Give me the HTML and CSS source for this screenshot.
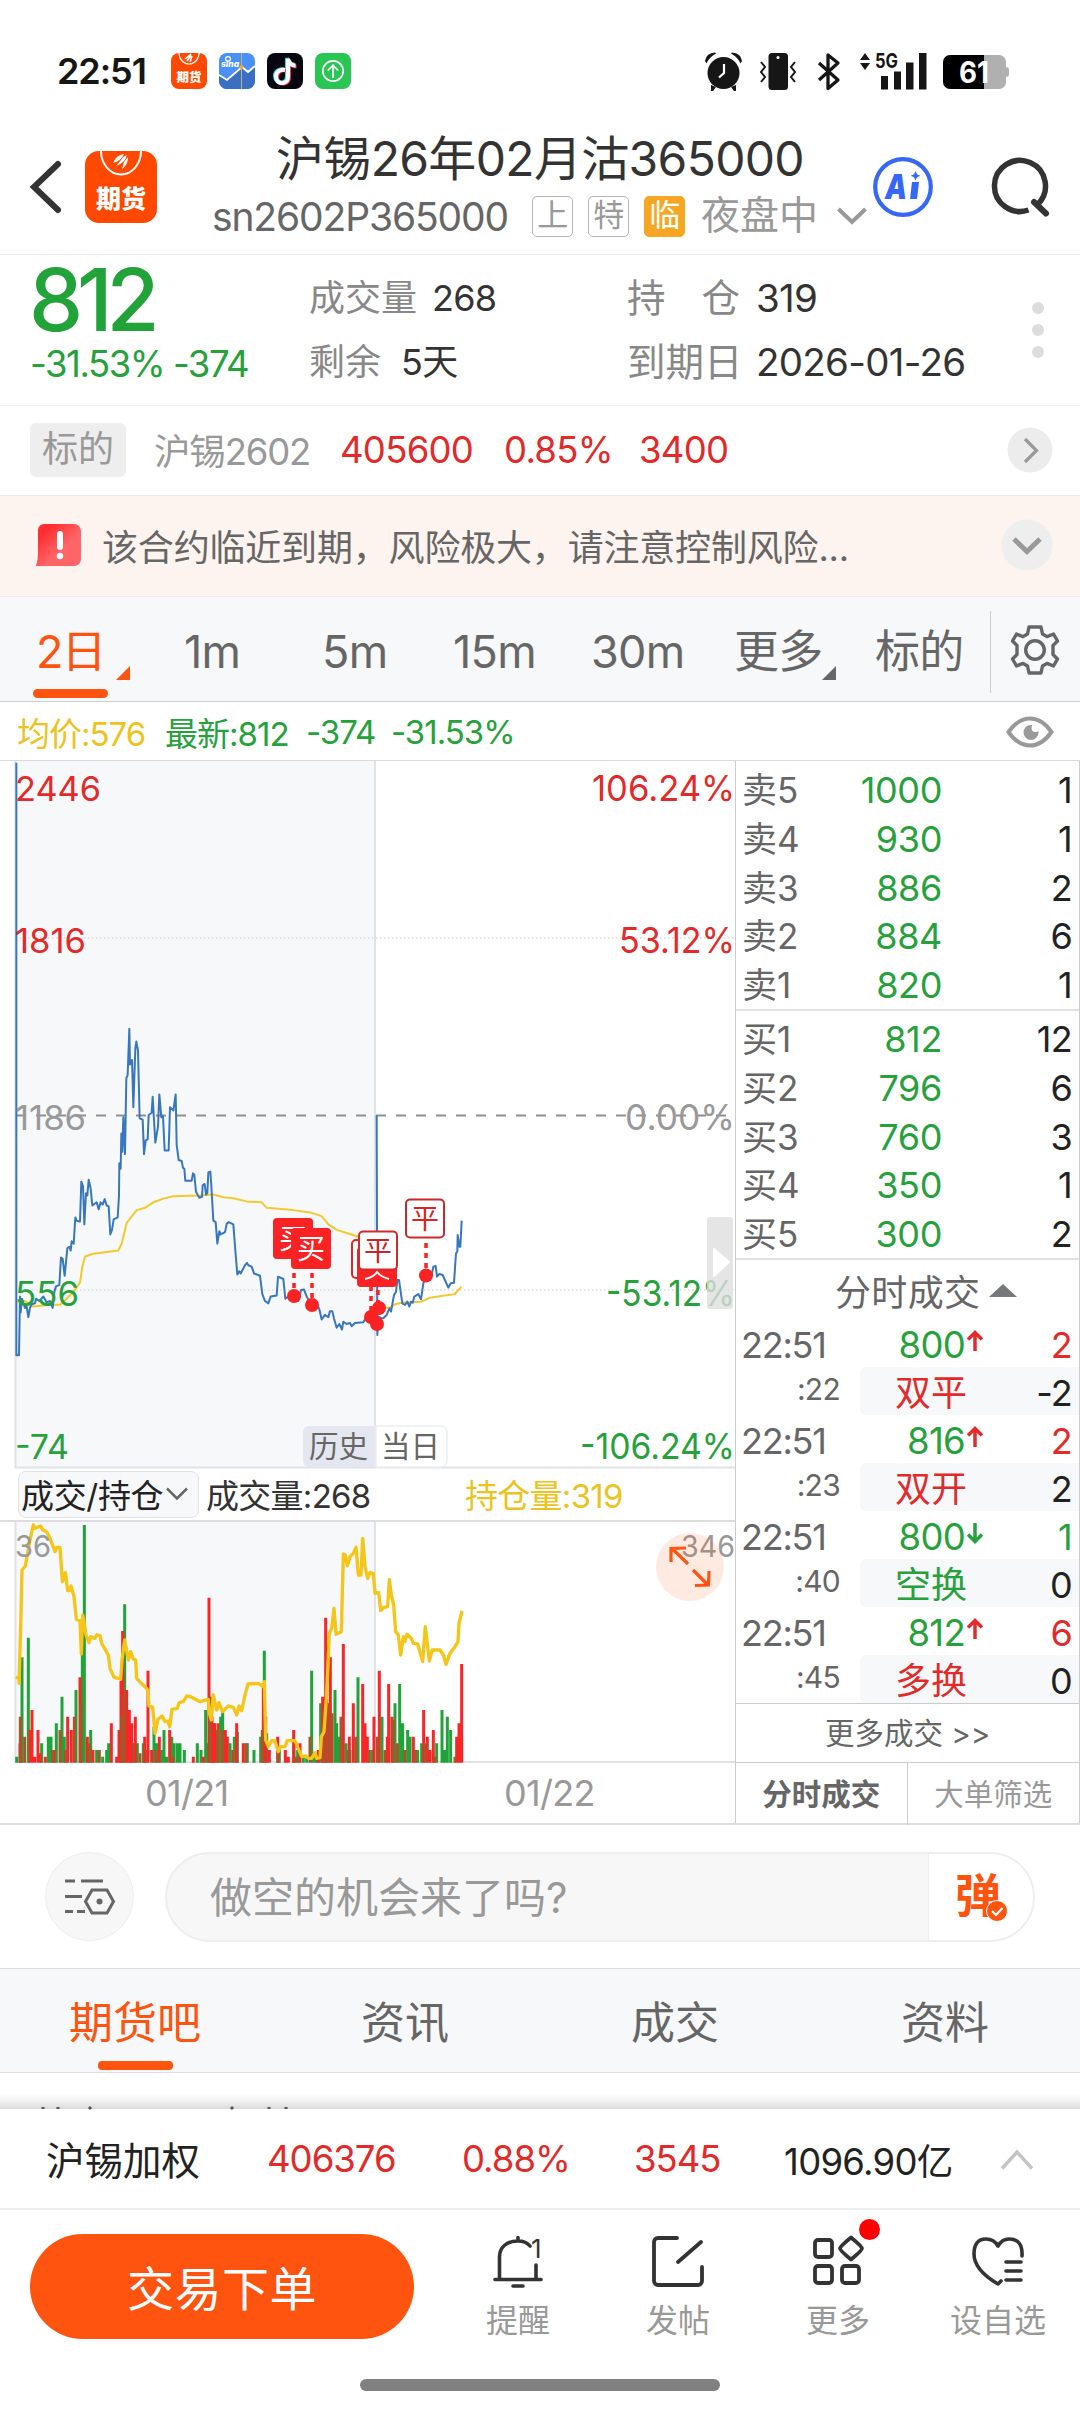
FILE: index.html
```html
<!DOCTYPE html>
<html lang="zh-CN">
<head>
<meta charset="utf-8">
<title>沪锡26年02月沽365000</title>
<link rel="stylesheet" href="styles.css">
</head>
<body>
<div class="screen">

  <div class="status">
    <span class="clock">22:51</span>
    <svg class="app" viewBox="0 0 36 36"><rect width="36" height="36" rx="8" fill="#ff4800"/><path d="M8 0a10 11 0 0 0 20 0" fill="none" stroke="#fff" stroke-width="1.2"/><path d="M14 6l6-5M16 8l4-6M19 9l2-6" stroke="#fff" stroke-width="1.6"/><text x="18" y="29" font-size="12.5" font-weight="900" fill="#fff" text-anchor="middle">期货</text></svg>
    <svg class="app" viewBox="0 0 36 36"><defs><clipPath id="appClip"><rect width="36" height="36" rx="8"/></clipPath></defs><g clip-path="url(#appClip)"><rect width="36" height="36" fill="#4a90f7"/><path d="M0 22l8 5 15-13 6 5 7-6v23H0z" fill="#3b6fc4"/><path d="M0 22l8 5 15-13 6 5 7-6" fill="none" stroke="#fff" stroke-width="1.8"/><path d="M22.500 0v36" stroke="#b9b08e"/><circle cx="22.500" cy="14" r="2" fill="#f5a623"/></g><circle cx="9" cy="6" r="2.400" fill="none" stroke="#fff" stroke-width="1.200"/><text x="2" y="13.500" font-size="8.500" font-style="italic" font-weight="800" fill="#fff">sina</text></svg>
    <svg class="app" viewBox="0 0 36 36"><rect width="36" height="36" rx="8" fill="#07070f"/><g fill="none" stroke-width="4"><path d="M17 16.500c-5-1-9 2-9 6.500s3.500 7 7 6.500 5-3 5-6.500V5c1 4 4 6.500 7.500 6.500" stroke="#25e0dd"/><path d="M19 17.500c-5-1-9 2-9 6.500s3.500 7 7 6.500 5-3 5-6.500V7c1 4 4 6.500 7.500 6.500" stroke="#f8305c"/><path d="M18 17c-5-1-9 2-9 6.500s3.500 7 7 6.500 5-3 5-6.500V6c1 4 4 6.500 7.500 6.500" stroke="#fff"/></g></svg>
    <svg class="app" viewBox="0 0 36 36"><rect width="36" height="36" rx="8" fill="#2ac653"/><g fill="none" stroke="#fff" stroke-width="1.700"><circle cx="18" cy="18" r="10.200"/><path d="M18 25V12.500M12.800 17.500L18 12.300l5.200 5.200"/></g></svg>
    <span class="grow"></span>
    <svg class="sys" viewBox="705 51 304 38">
      <g fill="#161616">
        <circle cx="723.500" cy="72" r="16"/>
        <path d="M705 60q1-8 10-8.500l1 1q-7 4-9.500 10zM742 60q-1-8-10-8.500l-1 1q7 4 9.500 10zM711 84l5 2-3 4h-2zM736 84l-5 2 3 4h2z"/>
        <rect x="768.500" y="52" width="19.500" height="37" rx="3.500"/>
        <path d="M860 59l5-7 5 7zM860 62l5 7 5-7z"/>
        <path d="M881 75h7v13.500h-7zM894 70.500h7v18h-7zM906 61.500h7.500v27H906zM919 52h7.500v36.500H919z"/>
      </g>
      <path d="M724 63v9l-5 4.500" fill="none" stroke="#fff" stroke-width="2.200"/>
      <circle cx="778" cy="56.500" r="1.500" fill="#fff"/>
      <path d="M761 61l4 5-4 5 4 5-4 5M795 61l-4 5 4 5-4 5 4 5" fill="none" stroke="#161616" stroke-width="2"/>
      <path d="M819 62l19 17-10 8.500V54l10 8-19 17" fill="none" stroke="#161616" stroke-width="3.300" stroke-linejoin="round"/>
      <text x="875" y="67" font-size="20" font-weight="700" fill="#161616" textLength="23" lengthAdjust="spacingAndGlyphs">5G</text>
      <path d="M984 54h15a7 7 0 0 1 7 7v5q3 0 3 3v4q0 3-3 3v5a7 7 0 0 1-7 7h-15z" fill="#b0b0b0"/>
      <path d="M984 54v34h-34a7 7 0 0 1-7-7V61a7 7 0 0 1 7-7z" fill="#000"/>
      <text x="959" y="82" font-size="30" font-weight="700" fill="#fff" textLength="30" lengthAdjust="spacingAndGlyphs">61</text>
    </svg>
  </div>

  <div class="header">
    <svg class="back" viewBox="0 0 32 54"><path d="M28 4L4 27l24 23" fill="none" stroke="#333" stroke-width="6" stroke-linecap="round"/></svg>
    <svg class="logo" viewBox="0 0 72 72"><rect width="72" height="72" rx="14" fill="#ff4800"/><path d="M16 0a20 23.500 0 0 0 40 0" fill="none" stroke="#fff" stroke-width="2"/><path d="M28 12q8-2 11-9-8 1-11 9zM31 15q9-3 11-11-4 1-6 5zM37 18q6-4 6-12l-4 5z" fill="#fff"/><text x="36" y="57" font-size="25" font-weight="900" fill="#fff" text-anchor="middle">期货</text></svg>
    <div class="titles">
      <div class="title">沪锡26年02月沽365000</div>
      <div class="subtitle">
        <span class="code">sn2602P365000</span>
        <span class="tag">上</span><span class="tag">特</span><span class="tag tag-hot">临</span>
        <span class="session">夜盘中</span>
        <svg class="caret" viewBox="0 0 30 18"><path d="M1.500 2L15 15 28.500 2" fill="none" stroke="#999" stroke-width="4"/></svg>
      </div>
    </div>
    <svg class="ai" viewBox="0 0 60 60"><circle cx="30" cy="30" r="27.800" fill="none" stroke="#3767f5" stroke-width="4.200"/><text x="12" y="42" font-size="34" font-weight="900" font-style="italic" fill="#3767f5" textLength="22" lengthAdjust="spacingAndGlyphs">A</text><path d="M39 25h7l-2 17h-7z" fill="#3767f5"/><path d="M42.500 14l1.500 3.200 3.200 1.500-3.200 1.500-1.500 3.200-1.500-3.200-3.200-1.500 3.200-1.500z" fill="#3767f5"/></svg>
    <svg class="search" viewBox="0 0 58 58"><path d="M37.500 52A25.500 25.500 0 1 1 47 46" fill="none" stroke="#333" stroke-width="5.500"/><path d="M43 44l12 11.500" stroke="#333" stroke-width="6" stroke-linecap="round"/></svg>
  </div>

  <div class="quote">
    <div class="main">
      <div class="last">812</div>
      <div class="change">-31.53% -374</div>
    </div>
    <dl class="facts">
      <div><dt>成交量</dt><dd>268</dd></div>
      <div class="remain"><dt>剩余</dt><dd>5天</dd></div>
    </dl>
    <dl class="facts wide">
      <div><dt class="spread"><span>持</span><span>仓</span></dt><dd>319</dd></div>
      <div><dt>到期日</dt><dd>2026-01-26</dd></div>
    </dl>
    <div class="dots"><i></i><i></i><i></i></div>
  </div>

  <div class="underlying">
    <span class="chip">标的</span>
    <span class="uname">沪锡2602</span>
    <span class="up">405600</span>
    <span class="up">0.85%</span>
    <span class="up">3400</span>
    <svg class="round" viewBox="0 0 46 46"><circle cx="23" cy="23" r="22.500" fill="#ececec"/><path d="M18 12l11.500 11.500L18 35" fill="none" stroke="#999" stroke-width="3.200"/></svg>
  </div>

  <div class="notice">
    <svg class="alert" viewBox="0 0 45 42"><defs><linearGradient id="alertFill" x1="0" y1="0" x2="1" y2="1"><stop offset=".2" stop-color="#ff2f31"/><stop offset=".6" stop-color="#ff6568"/></linearGradient></defs><path d="M8 0h30a7 7 0 0 1 7 7v28a7 7 0 0 1-7 7H0q2-6 2-12V6a6 6 0 0 1 6-6z" fill="url(#alertFill)"/><rect x="21" y="7" width="6" height="19" rx="3" fill="#fff"/><circle cx="24" cy="32" r="3.200" fill="#fff"/></svg>
    <span class="msg">该合约临近到期，风险极大，请注意控制风险...</span>
    <svg class="fold" viewBox="0 0 52 52"><circle cx="26" cy="26" r="25.500" fill="#eee"/><path d="M13 20l13 12.500L39 20" fill="none" stroke="#999" stroke-width="5"/></svg>
  </div>

  <div class="periods">
    <span class="on">2日</span>
    <span>1m</span>
    <span>5m</span>
    <span>15m</span>
    <span>30m</span>
    <span class="more">更多</span>
    <span>标的</span>
    <span class="gear"><svg viewBox="-24 -25 48 50"><g fill="none" stroke="#666" stroke-width="3.400" stroke-linejoin="round"><path d="M-6-23H6l1.500 7 4.500 2.600 6.500-2.600 4 7-4.500 4.500v9L22.500 9l-4 7-6.500-2.600L7.500 16 6 23H-6l-1.500-7-4.500-2.600-6.500 2.600-4-7 4.500-4.500v-9L-22.500-9l4-7 6.500 2.600L-7.500-16z"/><circle r="9.300"/></g></svg></span>
  </div>

  <div class="legend">
    <span class="avg">均价:576</span>
    <span>最新:812</span>
    <span>-374</span>
    <span>-31.53%</span>
    <svg class="eye" viewBox="0 0 48 32"><path d="M2.500 16Q12 2.500 24 2.500T45.500 16Q36 29.500 24 29.500T2.500 16z" fill="none" stroke="#999" stroke-width="4"/><circle cx="25" cy="16.500" r="7.500" fill="#999"/><circle cx="29.500" cy="12" r="4" fill="#fff"/></svg>
  </div>

  <div class="board">
    <div class="charts">
      <svg class="price" viewBox="0 761 738 707">
        <rect x="15" y="761" width="360" height="707" fill="#f7f8fa"/>
        <g stroke="#e1e2e5" stroke-width="2"><path d="M15.500 761v707M375 761v707M15 1467.500h721"/></g>
        <path d="M16 938h720M16 1290h720" stroke="#dcdcdc" stroke-width="1.500" stroke-dasharray="1.500 2.500"/>
        <path d="M16 1115.500h720" stroke="#8f8f8f" stroke-width="2" stroke-dasharray="10 10"/>
        <g fill="none" stroke="#f3c92e" stroke-width="2" stroke-linejoin="round">
          <path transform="translate(0 750) scale(.33333 .4592)" vector-effect="non-scaling-stroke" d="M49 1200L75 1200 100 1212 150 1208 180 1208 200 1195 225 1175 240 1160 247 1125 255 1103 280 1097 355 1090 365 1075 380 1030 410 1002 435 997 460 985 490 977 520 972 600 970 640 968 670 974 700 976 740 983 785 985 800 997 880 1002 930 1007 965 1015 985 1033 1010 1045 1045 1053 1075 1060"/>
          <path transform="translate(340 1020) scale(.33333)" vector-effect="non-scaling-stroke" d="M135 863L150 863 165 853 185 848 245 845 270 833 345 822 355 810 365 800"/>
        </g>
        <g fill="none" stroke="#3877bd" stroke-width="2" stroke-linejoin="round">
          <path transform="translate(0 750) scale(.33333 .4592)" vector-effect="non-scaling-stroke" d="M49 28L49 1318 57 1318 60 1190 62 1225 66 1195 75 1215 80 1212 85 1235 90 1215 95 1207 105 1205 108 1195 118 1200 130 1190 140 1203 150 1200 158 1215 163 1180 168 1168 178 1165 183 1105 188 1108 194 1145 202 1085 208 1082 212 1090 215 1070 221 1075 226 1018 230 1025 240 1027 244 940 249 950 253 1033 258 965 262 970 266 936 272 955 277 992 290 985 296 1000 302 985 308 990 314 978 320 992 326 994 331 1055 336 1045 341 1022 353 1018 357 970 358 900 362 912 364 835 367 875 370 800 375 880 379 715 383 708 388 607 390 685 396 675 400 778 406 650 409 635 414 655 419 802 428 805 432 880 437 850 443 848 446 795 455 790 458 755 466 855 474 820 478 750 484 800 489 798 494 872 506 872 510 778 520 785 527 750 530 860 536 893 545 895 549 910 553 912 556 938 575 938 579 922 583 925 588 962 598 975 606 973 608 948 614 945 618 968 622 965 625 920 631 918 634 950 640 1025 647 1028 652 1075 658 1048 662 1055 675 1050 680 1032 686 1028 700 1033 706 1090 712 1142 718 1135 722 1140 735 1122 741 1117 745 1122 755 1125 762 1140 780 1145 787 1185 795 1200 805 1205 812 1190 830 1188 834 1147 850 1152 856 1195 865 1190 882 1190 895 1200 903 1176 912 1175 920 1190 935 1210 950 1205 958 1218 965 1240 975 1230 985 1235 990 1222 997 1222 1002 1238 1010 1258 1018 1250 1026 1262 1030 1245 1040 1250 1050 1248 1055 1255 1065 1248 1090 1246 1100 1235 1115 1232"/>
          <path transform="translate(340 1020) scale(.33333)" vector-effect="non-scaling-stroke" d="M110 286L112 945 115 890 125 895 130 895 140 885 148 865 153 875 162 825 168 815 172 780 177 780 187 850 195 855 202 845 208 860 213 845 218 848 223 830 235 822 243 838 250 790 258 768 275 765 280 740 287 738 291 770 298 762 308 765 325 803 332 790 342 788 348 700 352 695 353 645 358 680 361 680 365 602"/>
        </g>
        <g stroke="#fa2222" stroke-width="3.500" stroke-dasharray="5 5"><path d="M294 1273v20M312 1273v28M371 1286v28M378 1290v28M426 1243v30"/></g>
        <g fill="#fa2222"><circle cx="294" cy="1296" r="7"/><circle cx="312" cy="1305" r="7"/><circle cx="379" cy="1308" r="7"/><circle cx="371" cy="1317" r="7"/><circle cx="377" cy="1324" r="7"/><circle cx="426" cy="1275.500" r="7"/></g>
        <g font-size="28" text-anchor="middle">
          <rect x="273" y="1218" width="40" height="41" rx="4" fill="#fa2222"/><text x="293" y="1249" fill="#fff">买</text>
          <rect x="291" y="1228" width="40" height="41" rx="4" fill="#fa2222"/><text x="311" y="1259" fill="#fff">买</text>
          <rect x="352" y="1240" width="38" height="38" rx="4" fill="#fff" stroke="#d5292b" stroke-width="2"/>
          <rect x="357" y="1247" width="40" height="40" rx="4" fill="#fa2222"/><path d="M365 1279q9-2 12-7 4 5 12 7" fill="none" stroke="#fff" stroke-width="2"/>
          <rect x="359" y="1231.500" width="38" height="38" rx="4" fill="#fff" stroke="#d5292b" stroke-width="2"/><text x="378" y="1261" fill="#c62628">平</text>
          <rect x="406" y="1199.500" width="38" height="38" rx="4" fill="#fff" stroke="#c8292b" stroke-width="2"/><text x="425" y="1229" fill="#d62628">平</text>
        </g>
        <g font-size="34.500">
          <text x="15" y="801" fill="#e32a2a" textLength="86" lengthAdjust="spacingAndGlyphs">2446</text>
          <text x="15" y="953" fill="#e32a2a" textLength="71" lengthAdjust="spacingAndGlyphs">1816</text>
          <text x="15" y="1130" fill="#999" textLength="71" lengthAdjust="spacingAndGlyphs">1186</text>
          <text x="15" y="1305.500" fill="#26a13c" textLength="64" lengthAdjust="spacingAndGlyphs">556</text>
          <text x="15" y="1458.500" fill="#26a13c" textLength="54" lengthAdjust="spacingAndGlyphs">-74</text>
        </g>
        <g font-size="36">
          <text x="592" y="801" fill="#e32a2a" textLength="143" lengthAdjust="spacingAndGlyphs">106.24%</text>
          <text x="619" y="953" fill="#e32a2a" textLength="116" lengthAdjust="spacingAndGlyphs">53.12%</text>
          <text x="625" y="1130" fill="#999" textLength="110" lengthAdjust="spacingAndGlyphs">0.00%</text>
          <text x="606" y="1306" fill="#26a13c" textLength="129" lengthAdjust="spacingAndGlyphs">-53.12%</text>
          <text x="580" y="1459" fill="#26a13c" textLength="155" lengthAdjust="spacingAndGlyphs">-106.24%</text>
        </g>
        <path d="M375 1426h-66a6 6 0 0 0-6 6v29a6 6 0 0 0 6 6h66z" fill="#e4e7ef"/>
        <path d="M376 1426h65a6 6 0 0 1 6 6v29a6 6 0 0 1-6 6h-65z" fill="#fff" stroke="#eceef2" stroke-width="1.500"/>
        <g font-size="29.500" fill="#666"><text x="309" y="1457">历史</text><text x="381" y="1457">当日</text></g>
        <rect x="707" y="1217" width="26" height="92" rx="3" fill="#dedede" opacity=".8"/><path d="M714 1249l15 13-15 14z" fill="#fff" stroke="#fff" stroke-width="2" stroke-linejoin="round"/>
      </svg>

      <div class="indicator">
        <span class="picker">成交/持仓<svg viewBox="0 0 22 14"><path d="M1 1.500l10 10 10-10" fill="none" stroke="#666" stroke-width="2.500"/></svg></span>
        <span class="vol">成交量:268</span>
        <span class="oi">持仓量:319</span>
      </div>

      <svg class="volume" viewBox="0 1522 738 241">
        <rect x="15" y="1522" width="360" height="240" fill="#f7f8fa"/>
        <g stroke="#e1e2e5" stroke-width="2"><path d="M15.500 1522v241M375 1522v241M15 1762h721"/></g>
        <g transform="translate(0 1460) scale(.33333)" fill="none" stroke-width="9">
          <path stroke="#22a33a" d="M50 908V890M66 908V592M85 908V533M125 908V850M145 908V830M153 908V830M169 908V790M186 908V710M193 908V830M228 908V690M247 908V560M253 908V195M272 908V810M290 908V870M308 908V890M320 908V870M326 908V850M374 908V433M393 908V850M400 908V850M412 908V850M430 908V850M437 908V870M462 908V800M470 908V850M485 908V870M492 908V810M500 908V890M515 908V830M522 908V850M532 908V850M540 908V850M553 908V870M592 908V850M603 908V870M617 908V750M622 908V850M640 908V790M652 908V810M662 908V770M668 908V750M690 908V850M703 908V830M712 908V815M742 908V850M762 908V870M782 908V830M793 908V572M800 908V820M838 908V870M882 908V850M893 908V870M910 908V890M920 908V895M935 908V632M942 908V880M962 908V730M980 908V715M1005 908V690M1010 908V790M1018 908V830M1038 908V850M1050 908V870M1074 908V652M1115 908V870M1146 908V770M1185 908V730M1199 908V672M1208 908V790M1223 908V810M1230 908V830M1253 908V870M1265 908V850M1310 908V850M1326 908V750M1335 908V870M1342 908V770M1352 908V810"/>
          <path stroke="#fa2626" d="M60 908V850M90 908V810M96 908V750M104 908V890M114 908V810M120 908V880M136 908V890M162 908V870M203 908V770M214 908V810M240 908V652M262 908V830M279 908V870M334 908V790M350 908V890M357 908V810M363 908V662M368 908V513M380 908V690M388 908V750M395 908V790M406 908V770M434 908V830M444 908V632M455 908V870M478 908V830M509 908V810M580 908V890M610 908V890M627 908V413M636 908V770M645 908V790M676 908V810M682 908V830M710 908V790M730 908V850M790 908V670M797 908V770M808 908V870M833 908V830M856 908V870M865 908V890M881 908V810M900 908V850M955 908V870M968 908V710M977 908V473M991 908V592M1030 908V552M1048 908V830M1060 908V730M1088 908V672M1095 908V790M1102 908V830M1122 908V770M1138 908V632M1166 908V672M1176 908V770M1162 908V830M1240 908V830M1271 908V750M1282 908V830M1300 908V810M1290 908V870M1370 908V830M1377 908V790M1385 908V612"/>
          <path stroke="#a8552a" d="M61 908V770M74 908V830M158 908V870M180 908V810M196 908V870M223 908V770M243 908V730M268 908V850M298 908V870M365 908V770M372 908V710M420 908V880M468 908V870M520 908V890M631 908V710M655 908V790M667 908V810M698 908V870M738 908V850M787 908V810M835 908V860M888 908V890M930 908V830M950 908V890M972 908V810M984 908V730M996 908V760M1023 908V770M1045 908V870M1068 908V830M1107 908V870M1132 908V830M1155 908V870M1180 908V780M1192 908V850M1215 908V870M1247 908V870M1276 908V850M1305 908V890M1365 908V890"/>
          <path stroke="#f5c518" stroke-width="10" stroke-linejoin="round" d="M47 652L57 655 57 670 62 500 66 330 76 318 90 240 100 195 105 205 122 198 128 210 140 215 150 235 165 275 170 262 180 262 187 365 196 338 203 392 208 392 213 378 222 410 229 478 240 482 244 582 248 465 252 485 258 525 267 548 272 530 285 535 290 525 300 527 305 550 325 585 330 625 342 652 362 657 366 600 374 540 385 600 392 575 400 597 407 600 410 655 422 668 435 680 443 690 447 738 458 742 465 820 474 778 486 768 495 785 503 783 509 800 516 748 532 745 537 728 550 725 560 708 572 710 600 725 625 718 628 760 634 780 640 705 650 750 657 728 667 755 685 738 700 742 710 765 717 738 725 752 735 705 744 672 775 670 790 680 793 665 797 840 805 860 815 842 825 843 835 875 842 860 855 860 862 842 885 842 893 862 905 890 918 888 925 895 935 895 945 878 950 895 960 893 964 830 972 815 980 700 988 520 995 505 1002 445 1008 523 1024 515 1030 282 1036 285 1042 317 1050 290 1060 280 1068 262 1075 345 1083 345 1088 235 1095 320 1103 355 1110 338 1120 340 1125 400 1136 398 1142 452 1150 443 1163 440 1168 358 1174 405 1181 435 1187 515 1195 525 1202 585 1210 530 1214 545 1221 523 1234 535 1240 550 1253 552 1268 605 1276 500 1288 603 1297 570 1320 570 1330 585 1338 613 1350 580 1365 560 1374 545 1377 490 1386 453"/>
        </g>
        <g font-size="30" fill="#999"><text x="15" y="1557" textLength="36" lengthAdjust="spacingAndGlyphs">36</text><text x="681" y="1557" textLength="54" lengthAdjust="spacingAndGlyphs">346</text></g>
        <circle cx="690" cy="1567" r="34" fill="#ff5310" opacity=".12"/>
        <path d="M688 1564l-16-15.500M671 1562v-13.500l15-.5M693 1570l15 15M695 1585.500l13.500-.5.500-14" fill="none" stroke="#ff5310" stroke-width="3.200"/>
      </svg>

      <div class="dates"><span>01/21</span><span>01/22</span></div>
    </div>

    <div class="book">
      <div class="levels asks">
        <div><span>卖5</span><b>1000</b><em>1</em></div>
        <div><span>卖4</span><b>930</b><em>1</em></div>
        <div><span>卖3</span><b>886</b><em>2</em></div>
        <div><span>卖2</span><b>884</b><em>6</em></div>
        <div><span>卖1</span><b>820</b><em>1</em></div>
      </div>
      <div class="levels bids">
        <div><span>买1</span><b>812</b><em>12</em></div>
        <div><span>买2</span><b>796</b><em>6</em></div>
        <div><span>买3</span><b>760</b><em>3</em></div>
        <div><span>买4</span><b>350</b><em>1</em></div>
        <div><span>买5</span><b>300</b><em>2</em></div>
      </div>
      <div class="ticks-head">分时成交<i></i></div>
      <div class="ticks">
        <div class="tick"><span>22:51</span><b>800</b><svg class="r" viewBox="0 0 18 22"><path d="M9 21V3M2 9.500L9 2.500l7 7"/></svg><em class="r">2</em></div>
        <div class="detail"><small>:22</small><p><b class="r">双平</b><em>-2</em></p></div>
        <div class="tick"><span>22:51</span><b>816</b><svg class="r" viewBox="0 0 18 22"><path d="M9 21V3M2 9.500L9 2.500l7 7"/></svg><em class="r">2</em></div>
        <div class="detail"><small>:23</small><p><b class="r">双开</b><em>2</em></p></div>
        <div class="tick"><span>22:51</span><b>800</b><svg class="g" viewBox="0 0 18 22"><path d="M9 1v18M2 12.500l7 7 7-7"/></svg><em class="g">1</em></div>
        <div class="detail"><small>:40</small><p><b class="g">空换</b><em>0</em></p></div>
        <div class="tick"><span>22:51</span><b>812</b><svg class="r" viewBox="0 0 18 22"><path d="M9 21V3M2 9.500L9 2.500l7 7"/></svg><em class="r">6</em></div>
        <div class="detail"><small>:45</small><p><b class="r">多换</b><em>0</em></p></div>
      </div>
      <div class="all">更多成交 &gt;&gt;</div>
      <div class="modes"><span class="cur">分时成交</span><span>大单筛选</span></div>
    </div>
  </div>

  <div class="ask">
    <span class="tune"><svg viewBox="0 0 50 36"><g fill="none" stroke="#666" stroke-width="3"><path d="M0 2h10M16 2h22M0 17.500h17M0 32.500h8M12 32.500h8"/><path d="M27 11h15l6.500 11.500L42 34H27l-6.500-11.500z"/></g><circle cx="34.500" cy="22.500" r="3" fill="#666"/></svg></span>
    <div class="box">
      <span class="hint">做空的机会来了吗?</span>
      <span class="dan">弹<svg viewBox="0 0 22 22"><circle cx="11" cy="11" r="10.500" fill="#ff5310" stroke="#fff"/><path d="M6 11l4 4 6.500-7" fill="none" stroke="#fff" stroke-width="2.200"/></svg></span>
    </div>
  </div>

  <div class="sections"><span class="on">期货吧</span><span>资讯</span><span>成交</span><span>资料</span></div>

  <div class="peek"><svg viewBox="0 0 1080 35"><path d="M43 33v2M58 33v2M89 33l2 2M231 33l2 2M269 33v2M286 33v2" stroke="#555" stroke-width="3"/></svg></div>

  <div class="index">
    <span>沪锡加权</span>
    <span class="up">406376</span>
    <span class="up">0.88%</span>
    <span class="up">3545</span>
    <span>1096.90亿</span>
    <svg viewBox="0 0 34 22"><path d="M2 20.500L17 4l15 16.500" fill="none" stroke="#c4c4c4" stroke-width="3.500"/></svg>
  </div>

  <div class="actions">
    <button class="trade">交易下单</button>
    <div class="act">
      <svg viewBox="0 0 52 54"><g fill="none" stroke="#333" stroke-width="3.600" stroke-linecap="round" stroke-linejoin="round"><path d="M26 3.500v3M3 45.500h46M7.500 45V23C7.500 13 15 7 26 7q8 0 12 5M44 31v14M21 52h10"/></g><text x="39" y="24" font-size="26" fill="#333">1</text></svg>提醒
    </div>
    <div class="act">
      <svg viewBox="0 0 52 54"><g fill="none" stroke="#333" stroke-width="3.800" stroke-linecap="round"><path d="M25 4H6a4 4 0 0 0-4 4v39a4 4 0 0 0 4 4h40a4 4 0 0 0 4-4V33M49 8L26 28"/></g></svg>发帖
    </div>
    <div class="act">
      <svg viewBox="0 0 52 54"><g fill="none" stroke="#333" stroke-width="3.800" stroke-linejoin="round"><rect x="3" y="6" width="17" height="17" rx="3"/><rect x="3" y="32" width="17" height="17" rx="3"/><rect x="30" y="32" width="17" height="17" rx="3"/><path d="M39 3.500q11 9 11 11t-11 11q-11-9-11-11t11-11z"/></g></svg><i class="dot"></i>更多
    </div>
    <div class="act">
      <svg viewBox="0 0 52 54"><g fill="none" stroke="#333" stroke-width="3.600" stroke-linecap="round" stroke-linejoin="round"><path d="M50 22Q51 5 37 5q-7 0-11 7Q22 5 14 5 2 5 2 20q0 16 24 30l3-3M34 28h15M34 37h15M34 46h15"/></g></svg>设自选
    </div>
  </div>
  <div class="home"></div>
</div>
</body>
</html>
```
FILE: styles.css
```css
* { box-sizing: border-box; }

body, dl, dd, p { margin: 0; }
b, em, i { font-weight: inherit; font-style: normal; }

body {
  background: #fff;
  color: #333;
  font-family: Inter, "Noto Sans CJK SC", sans-serif;
  font-size: 36px;
  letter-spacing: -0.02em;
  white-space: nowrap;
}

svg { display: block; flex: none; overflow: visible; letter-spacing: 0; }

.screen {
  width: 1080px;
  height: 2412px;
  overflow: hidden;
}

.grow { flex: 1; }
.up { color: #e32a2a; }
.r { color: #e32a2a; }
.g { color: #26a13c; }

/* status bar */
.status {
  display: flex;
  align-items: center;
  gap: 12px;
  height: 120px;
  padding: 22px 71px 0 57px;
}
.clock {
  width: 102px;
  color: #161616;
  font-size: 36px;
  font-weight: 600;
  line-height: 36px;
  letter-spacing: -0.03em;
}
.app { width: 36px; height: 36px; }
.sys { width: 304px; height: 38px; }

/* title bar */
.header {
  display: flex;
  align-items: center;
  height: 135px;
  padding-left: 30px;
  border-bottom: 1px solid #ebebeb;
}
.back { width: 32px; height: 54px; }
.logo { width: 72px; height: 72px; margin-left: 23px; }
.titles { width: 654px; margin-left: 56px; }
.title {
  font-size: 48px;
  line-height: 56px;
  text-align: center;
  letter-spacing: -0.014em;
}
.subtitle {
  display: flex;
  align-items: center;
  height: 54px;
  margin-top: 2px;
  color: #999;
  font-size: 39px;
}
.code { width: 319px; margin-left: -1px; margin-right: 1px; color: #666; letter-spacing: -0.029em; }
.tag {
  width: 41px;
  height: 41px;
  margin-right: 15px;
  border: 1.5px solid #b5b5b5;
  border-radius: 5px;
  font-size: 31px;
  line-height: 36px;
  text-align: center;
}
.tag-hot { border-color: #f5a623; background: #f5a623; color: #fff; }
.session { width: 136px; margin-left: 1px; letter-spacing: 0; line-height: 50px; margin-top: -2px; }
.caret { width: 30px; height: 18px; }
.ai { width: 60px; height: 60px; margin-left: 6px; }
.search { width: 58px; height: 58px; margin-left: 58px; }

/* quote */
.quote {
  display: grid;
  grid-template-columns: 279px 318px 404px 12px;
  height: 151px;
  padding: 9px 0 0 30px;
  border-bottom: 1px solid #f0f0f0;
}
.main { color: #22a33a; }
.last { margin-left: -1px; font-size: 86px; font-weight: 500; line-height: 72px; letter-spacing: -0.072em; }
.change { color: #26a13c; font-size: 36.5px; line-height: 57px; letter-spacing: -0.04em; }
.facts { padding-top: 2px; line-height: 64px; }
.facts > div { display: flex; }
.facts dt { color: #888; margin-right: 15px; letter-spacing: 0; }
.facts .remain dt { margin-right: 20px; }
.facts.wide { font-size: 38.500px; }
.facts.wide dt { width: 113px; margin-right: 16px; }
.spread { display: flex; justify-content: space-between; }
.dots {
  display: flex;
  flex-direction: column;
  gap: 10px;
  padding: 38px 0 0 1px;
}
.dots i { width: 12px; height: 12px; border-radius: 50%; background: #ddd; }

/* underlying contract */
.underlying {
  display: grid;
  grid-template-columns: 124px 186px 164px 135px 368px 46px;
  align-items: center;
  height: 90px;
  padding: 0 0 2px 30px;
  border-bottom: 1px solid #ebebeb;
  font-size: 36.500px;
}
.chip {
  width: 96px;
  height: 54px;
  border-radius: 6px;
  background: #eee;
  color: #999;
  font-size: 36px;
  line-height: 52px;
  text-align: center;
  letter-spacing: 0;
}
.uname { color: #999; letter-spacing: -0.032em; }
.round { width: 46px; height: 46px; }

/* expiry notice */
.notice {
  display: flex;
  align-items: center;
  height: 101px;
  padding: 0 27px 2px 36px;
  border-bottom: 1px solid #ebebeb;
  background: #fdf3ef;
}
.alert { width: 45px; height: 42px; }
.msg { flex: 1; margin-left: 21px; color: #666; letter-spacing: -0.005em; }
.fold { width: 52px; height: 52px; }

/* period tabs */
.periods {
  display: grid;
  grid-template-columns: 148px 138px 131px 138px 143px 141px 115px 90px;
  height: 105px;
  padding-left: 36px;
  border-bottom: 1.500px solid #ccced2;
  background: #f7f8fa;
  color: #666;
  font-size: 45px;
  line-height: 110px;
}
.periods span { position: relative; }
.periods .on { color: #ff5310; letter-spacing: -0.045em; }
.periods .on::before {
  content: "";
  position: absolute;
  left: -3px;
  bottom: 9px;
  width: 75px;
  height: 9px;
  border-radius: 5px;
  background: #ff5310;
}
.periods .on::after,
.periods .more::after {
  content: "";
  position: absolute;
  left: 80px;
  bottom: 27px;
  border: 7.500px solid transparent;
  border-right-color: currentColor;
  border-bottom-color: currentColor;
}
.periods .more::after { left: 88px; }
.periods .gear {
  align-self: center;
  height: 82px;
  padding: 14px 0 0 20px;
  border-left: 1px solid #ccc;
}
.gear svg { width: 48px; height: 50px; }

/* legend */
.legend {
  display: grid;
  grid-template-columns: 148px 141px 85px 615px 48px;
  align-items: center;
  height: 58px;
  padding: 1px 0 0 17px;
  color: #26a13c;
  font-size: 33px;
  letter-spacing: -0.03em;
}
.avg { color: #ecc321; }
.eye { width: 48px; height: 32px; }

/* chart board */
.board {
  display: grid;
  grid-template-columns: 735px 345px;
  height: 1065px;
  border-top: 1px solid #d9dadd;
  border-bottom: 2px solid #ddd;
}
.price { width: 738px; height: 707px; }
.indicator {
  display: flex;
  align-items: center;
  height: 54px;
  padding: 0 0 0 18px;
  border-bottom: 2px solid #ddd;
  font-size: 33px;
}
.picker {
  display: flex;
  align-items: center;
  gap: 3px;
  width: 181px;
  height: 47px;
  padding-left: 2px;
  border: 1.500px solid #e0e2e8;
  border-radius: 8px;
  background: #f7f8fa;
  color: #222;
  letter-spacing: -0.01em;
}
.picker svg { width: 22px; height: 14px; }
.vol { width: 259px; margin-left: 7px; }
.oi { color: #ecc321; }
.volume { width: 738px; height: 241px; }
.dates {
  display: grid;
  grid-template-columns: 359px 300px;
  height: 59px;
  padding-left: 145px;
  color: #999;
  line-height: 60px;
}

/* order book */
.book {
  border-left: 1.500px solid #ccc;
  border-right: 1.500px solid #ccc;
  color: #222;
}
.levels { border-bottom: 2px solid #e1e2e5; line-height: 48.800px; }
.asks { height: 250px; padding-top: 5px; }
.bids { height: 249px; padding-top: 4px; }
.levels > div { display: grid; grid-template-columns: 81px 119px 130px; padding-left: 6px; }
.levels span { color: #666; font-size: 35px; letter-spacing: 0; }
.levels b { color: #26a13c; text-align: right; letter-spacing: -0.01em; }
.levels em { text-align: right; }
.ticks-head {
  display: flex;
  align-items: center;
  gap: 9px;
  height: 60px;
  padding-left: 99px;
  color: #666;
  letter-spacing: 0.010em;
}
.ticks-head i {
  border: 14px solid transparent;
  border-top-width: 0;
  border-bottom: 13px solid #77787c;
}
.ticks { height: 383px; padding-top: 1px; }
.tick {
  display: grid;
  grid-template-columns: 110px 113px 18px 87px;
  align-items: center;
  column-gap: 1px;
  height: 46px;
  padding: 2px 0 0 5px;
}
.tick span { color: #666; letter-spacing: -0.035em; }
.tick b { color: #26a13c; text-align: right; font-size: 36.500px; }
.tick em, .detail em { text-align: right; }
.tick em.g { color: #26a13c; }
.tick svg { width: 18px; height: 22px; margin-top: -9px; fill: none; stroke: currentColor; stroke-width: 3.500; }
.detail { display: flex; height: 48px; margin-bottom: 2px; }
.detail small {
  width: 104px;
  margin-right: 20px;
  color: #666;
  font-size: 30px;
  line-height: 44px;
  text-align: right;
}
.detail p {
  display: grid;
  grid-template-columns: 107px 105px;
  flex: 1;
  border-radius: 6px 0 0 6px;
  background: #f7f8fa;
  line-height: 53px;
}
.detail b { text-align: right; letter-spacing: 0; }
.all {
  height: 60px;
  border-top: 1.500px solid #ccc;
  border-bottom: 1.500px solid #ccc;
  color: #666;
  font-size: 29.500px;
  line-height: 58px;
  padding-left: 89px;
  letter-spacing: 0;
}
.modes { display: grid; grid-template-columns: 1fr 1fr; height: 60px; }
.modes span {
  color: #999;
  font-size: 29.500px;
  line-height: 62px;
  text-align: center;
  letter-spacing: 0;
}
.modes .cur { border-right: 1px solid #ccc; color: #666; font-weight: 700; }

/* ask bar */
.ask {
  display: flex;
  align-items: center;
  height: 143px;
  padding-left: 45px;
}
.tune {
  display: grid;
  place-items: center;
  width: 89px;
  height: 89px;
  border: 1.500px solid #eee;
  border-radius: 50%;
  background: #f7f7f7;
}
.tune svg { width: 50px; height: 36px; }
.box {
  display: flex;
  width: 870px;
  height: 90px;
  margin-left: 31px;
  overflow: hidden;
  border: 2px solid #eee;
  border-radius: 45px;
  background: #f7f7f7;
}
.hint { width: 761px; padding-left: 43px; color: #999; font-size: 42px; line-height: 88px; letter-spacing: 0; }
.dan {
  position: relative;
  flex: 1;
  padding-left: 26px;
  border-left: 1.500px solid #eee;
  background: #fff;
  color: #ff5310;
  font-size: 46px;
  font-weight: 600;
  line-height: 82px;
}
.dan svg { position: absolute; left: 57px; top: 46px; width: 22px; height: 22px; }

/* section tabs */
.sections {
  display: grid;
  grid-template-columns: repeat(4, 1fr);
  height: 105px;
  border-top: 1.500px solid #ddd;
  border-bottom: 1.500px solid #ddd;
  background: #f7f8fa;
  color: #666;
  font-size: 44px;
  line-height: 108px;
  text-align: center;
  letter-spacing: 0;
}
.sections span { position: relative; height: 102px; }
.sections .on { color: #ff5310; }
.sections .on::after {
  content: "";
  position: absolute;
  left: 98px;
  bottom: 1px;
  width: 75px;
  height: 9px;
  border-radius: 4px;
  background: #ff5310;
}
.peek { height: 36px; padding-top: 1px; background: linear-gradient(#fff 55%, #f4f4f4 75%, #dadada); }
.peek svg { width: 1080px; height: 35px; }

/* index strip */
.index {
  display: grid;
  grid-template-columns: 221px 195px 172px 150px 216px 34px;
  align-items: center;
  height: 101px;
  padding: 1px 0 0 46px;
  border-bottom: 2px solid #eee;
  color: #222;
  font-size: 36.500px;
}
.index span:first-child { margin-top: -2px; font-size: 38.500px; letter-spacing: 0; }
.index .up { letter-spacing: -0.027em; }
.index svg { width: 34px; height: 22px; }

/* bottom actions */
.actions {
  display: grid;
  grid-template-columns: 384px 160px 160px 160px 163px;
  height: 169px;
  padding: 24px 0 0 30px;
}
.trade {
  width: 384px;
  height: 105px;
  margin: 0;
  padding: 0 0 3px;
  border: 0;
  border-radius: 53px;
  background: #ff5310;
  color: #fff;
  font: inherit;
  font-size: 47px;
  letter-spacing: 0.01em;
}
.act {
  position: relative;
  display: flex;
  flex-direction: column;
  align-items: center;
  width: 160px;
  margin-left: 24px;
  color: #999;
  font-size: 32px;
  line-height: 65px;
  letter-spacing: 0;
}
.act svg { width: 52px; height: 54px; }
.dot {
  position: absolute;
  left: 101px;
  top: -15px;
  width: 21px;
  height: 21px;
  border-radius: 50%;
  background: #f00;
}
.home { width: 360px; height: 12px; margin: 0 auto; border-radius: 6px; background: #808080; }
```
